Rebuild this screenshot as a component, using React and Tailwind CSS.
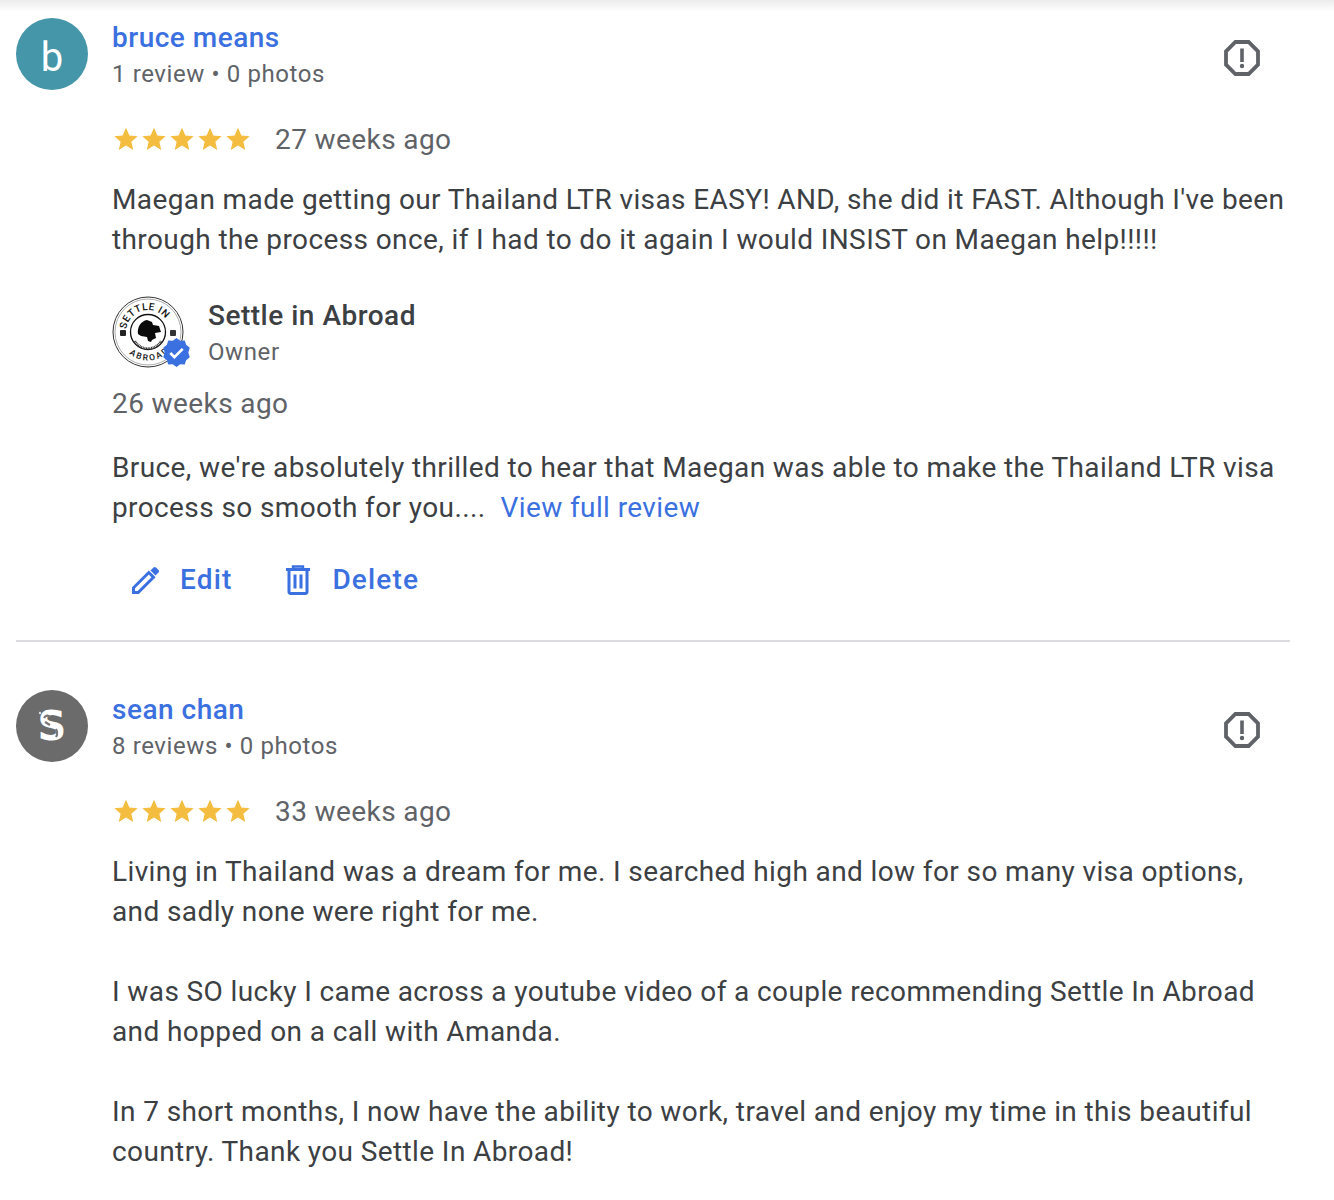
const BLUE = "#3b70e0";

function Star() {
  return (
    <svg viewBox="0 1 24 24" className="w-7 h-7 shrink-0" fill="#f4bd40">
      <path d="M12 2.600l2.900 6.500 7.100.7-5.400 4.700 1.600 7-6.200-3.700-6.200 3.700 1.600-7L2 9.800l7.100-.7z" />
    </svg>
  );
}

function ReportIcon() {
  return (
    <svg viewBox="0 0 36 36" className="w-9 h-9" fill="none">
      <path d="M11.400 2h13.200L34 11.400v13.200L24.600 34H11.400L2 24.600V11.400z" stroke="#5f6368" strokeWidth="3.800" />
      <rect x="16.200" y="8.500" width="3.600" height="13.500" fill="#5f6368" />
      <circle cx="18" cy="26" r="2.200" fill="#5f6368" />
    </svg>
  );
}

function Stars({ when }) {
  return (
    <div className="flex items-center h-10 mt-[30px]">
      <Star /><Star /><Star /><Star /><Star />
      <span className="ml-[23px] text-[28px] tracking-[0.4px] text-[#5f6368]">{when}</span>
    </div>
  );
}

function Logo() {
  return (
    <div className="relative w-[72px] h-[72px] shrink-0">
      <svg viewBox="0 0 72 72" className="w-[72px] h-[72px]">
        <circle cx="36" cy="36" r="35" fill="#fff" stroke="#333" strokeWidth="1" />
        <circle cx="36" cy="36" r="33" fill="none" stroke="#777" strokeWidth="0.6" />
        <circle cx="36" cy="36" r="17.500" fill="#fff" stroke="#111" strokeWidth="1.300" />
        <defs>
          <path id="arcTop" d="M14 36a22 22 0 0 1 44 0" />
          <path id="arcBottom" d="M8.500 44a28.700 28.700 0 0 0 55 0" />
        </defs>
        <text fontSize="10" fontWeight="500" fontFamily="Roboto, sans-serif" fill="#111" letterSpacing="0.500">
          <textPath href="#arcTop" startOffset="4%">SETTLE IN</textPath>
        </text>
        <text fontSize="8.500" fontWeight="500" fontFamily="Roboto, sans-serif" fill="#111" letterSpacing="2">
          <textPath href="#arcBottom" startOffset="22%">ABROAD</textPath>
        </text>
        <path d="M26 38c-1-7 3-13 9-14l5 2 1 3 6 1 2 6-6 1 1 5-4 2-1 2-3-1-1-4-6-1z" fill="#0a0a0a" />
        <rect x="8" y="34" width="6" height="6" rx="1" fill="#222" />
        <rect x="58" y="34" width="6" height="6" rx="1" fill="#333" />
        <path d="M23 45a15 15 0 0 0 26 0" fill="none" stroke="#333" strokeWidth="2.400" strokeDasharray="1 0.700" />
      </svg>
      <svg viewBox="0 0 28 28" className="absolute left-[50px] top-[42px] w-[29px] h-[29px]">
        <path d="M14 0l3.600 2.600 4.400-.2 1.300 4.200 3.500 2.700L25.400 14l1.400 4.700-3.500 2.700-1.300 4.200-4.400-.2L14 28l-3.600-2.600-4.400.2-1.300-4.200-3.500-2.700L2.600 14 1.200 9.300l3.500-2.700L6 2.400l4.400.2z" fill={BLUE} />
        <path d="M8 14.500l4 4 8-8" fill="none" stroke="#fff" strokeWidth="2.600" />
      </svg>
    </div>
  );
}

function Review({ avatar, name, meta, when, children }) {
  return (
    <div className="flex">
      <div className="w-24 shrink-0 pt-[18px]">{avatar}</div>
      <div className="flex-1 min-w-0">
        <div className="flex justify-between">
          <div className="pt-[18px]">
            <div className="text-[28px] leading-10 font-medium tracking-[0.5px]" style={{ color: BLUE }}>{name}</div>
            <div className="text-2xl leading-8 tracking-[0.6px] text-[#5f6368]">{meta}</div>
          </div>
          <div className="pt-10 pr-[30px]"><ReportIcon /></div>
        </div>
        <Stars when={when} />
        {children}
      </div>
    </div>
  );
}

export default function App() {
  return (
    <div className="relative w-[1334px] h-[1200px] overflow-hidden bg-white font-['Roboto',sans-serif]">
      <div className="absolute inset-x-0 top-0 h-3 bg-gradient-to-b from-[#ececec] to-white" />
      <div className="relative pl-4 w-[1290px]">
        <Review
          avatar={
            <div className="w-[72px] h-[72px] pt-2 rounded-full bg-[#4496a8] flex items-center justify-center text-white text-[40px]">b</div>
          }
          name="bruce means"
          meta="1 review • 0 photos"
          when="27 weeks ago"
        >
          <p className="mt-[20px] text-[28px] leading-10 text-[#3c4043] tracking-[0.39px] whitespace-nowrap">
            Maegan made getting our Thailand LTR visas EASY! AND, she did it FAST. Although I've been<br />
            through the process once, if I had to do it again I would INSIST on Maegan help!!!!!
          </p>
          <div className="flex mt-[36px]">
            <Logo />
            <div className="ml-6">
              <div className="text-[28px] leading-10 font-medium text-[#3c4043] tracking-[0.5px]">Settle in Abroad</div>
              <div className="text-2xl leading-8 tracking-[0.6px] text-[#5f6368]">Owner</div>
            </div>
          </div>
          <div className="mt-4 text-[28px] leading-10 tracking-[0.4px] text-[#5f6368]">26 weeks ago</div>
          <p className="mt-6 text-[28px] leading-10 text-[#3c4043] tracking-[0.39px] whitespace-nowrap">
            Bruce, we're absolutely thrilled to hear that Maegan was able to make the Thailand LTR visa<br />
            process so smooth for you....
            <span className="ml-[15px]" style={{ color: BLUE }}>View full review</span>
          </p>
          <div className="flex items-center h-10 mt-8 pl-[18px] text-[28px] font-medium tracking-[1.15px]" style={{ color: BLUE }}>
            <svg viewBox="0 0 32 32" className="w-8 h-8" fill="none">
              <path d="M3.500 23.800v4.700h4.700L23.500 13.200 18.800 8.500z" stroke={BLUE} strokeWidth="3" />
              <path d="M20.500 6.500l3-3a1.800 1.800 0 0 1 2.500 0l2.500 2.500a1.800 1.800 0 0 1 0 2.500l-3 3z" fill={BLUE} />
            </svg>
            <span className="ml-[18px]">Edit</span>
            <svg viewBox="0 0 32 32" className="w-8 h-8 ml-[50px]" fill="none">
              <path d="M4 5.500h24" stroke={BLUE} strokeWidth="3" />
              <path d="M11 5V2.500h10V5" stroke={BLUE} strokeWidth="2.400" />
              <path d="M7 6v22a1.500 1.500 0 0 0 1.500 1.500h15A1.500 1.500 0 0 0 25 28V6" stroke={BLUE} strokeWidth="3" />
              <path d="M13 10.500v14M19 10.500v14" stroke={BLUE} strokeWidth="3" />
            </svg>
            <span className="ml-[18px]">Delete</span>
          </div>
        </Review>
        <div className="h-0.5 bg-[#dadce0] mt-10 mb-[30px]" />
        <Review
          avatar={
            <div className="relative w-[72px] h-[72px] rounded-full bg-[#6b6b6b] flex items-center justify-center text-white text-[40px] font-bold font-['DejaVu_Sans',sans-serif]">
              S
              <svg viewBox="0 0 72 72" className="absolute inset-0 w-[72px] h-[72px]" fill="none">
                <path d="M28 28c2-3 4-3 6-1M29 32l5 3M40 39c1 2 2 5 0 8" stroke="#777" strokeWidth="2.200" />
                <circle cx="24" cy="23" r="1.200" fill="#ddd" />
              </svg>
            </div>
          }
          name="sean chan"
          meta="8 reviews • 0 photos"
          when="33 weeks ago"
        >
          <p className="mt-[20px] text-[28px] leading-10 text-[#3c4043] tracking-[0.39px] whitespace-nowrap">
            Living in Thailand was a dream for me. I searched high and low for so many visa options,<br />
            and sadly none were right for me.<br />
            <br />
            I was SO lucky I came across a youtube video of a couple recommending Settle In Abroad<br />
            and hopped on a call with Amanda.<br />
            <br />
            In 7 short months, I now have the ability to work, travel and enjoy my time in this beautiful<br />
            country. Thank you Settle In Abroad!
          </p>
        </Review>
      </div>
    </div>
  );
}
